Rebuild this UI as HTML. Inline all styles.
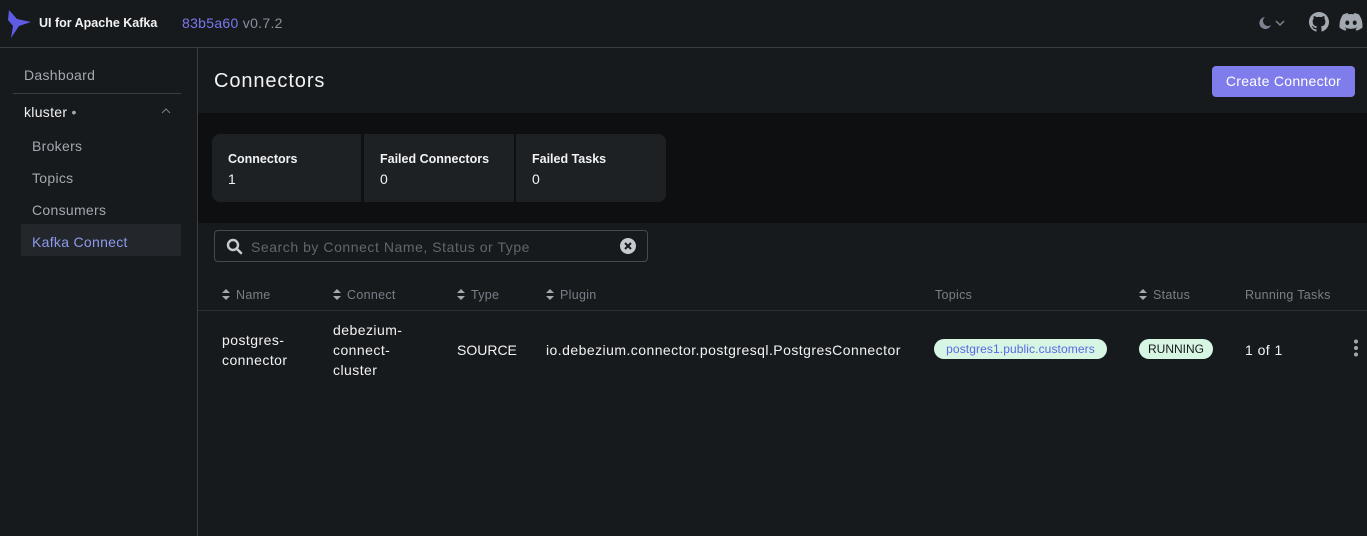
<!DOCTYPE html>
<html><head><meta charset="utf-8"><style>
*{box-sizing:border-box;margin:0;padding:0}
body{width:1367px;height:536px;background:#171a1c;font-family:"Liberation Sans",sans-serif;color:#f1f2f3;position:relative;overflow:hidden;font-size:14px;letter-spacing:0.3px}
.a{position:absolute;white-space:nowrap}
.hdr{left:0;top:0;width:1367px;height:48px;border-bottom:1px solid #3a3e44}
.side{left:197px;top:48px;width:1px;height:488px;background:#3a3e44}
.nav{color:#a3a9b0;font-size:14px}
.th{color:#787f88;font-size:12.5px}
.sort{display:inline-block;width:8px;margin-right:6px;vertical-align:-1px}
.card{background:#1e2124;height:68px;top:134px}
.card .l{position:absolute;left:16px;top:18px;font-size:12.5px;font-weight:bold;letter-spacing:0}
.card .v{position:absolute;left:16px;top:37px;font-size:14px}
.td{font-size:14px;color:#f1f2f3;line-height:20px;letter-spacing:0.45px}
</style></head><body>
<div class="a hdr"></div>
<svg class="a" style="left:8px;top:10px" width="24" height="28" viewBox="0 0 24 28"><path d="M1 0 L9 9 L23 12 L11 16 L3 28 L5 16 L0 10 Z" fill="#5e5ce6"/></svg>
<div class="a" style="left:39px;top:16px;font-size:12.5px;font-weight:bold;color:#f1f2f3;letter-spacing:0">UI for Apache Kafka</div>
<div class="a" style="left:182px;top:15px;font-size:14px;color:#7b78f0">83b5a60 <span style="color:#8a8fa0">v0.7.2</span></div>
<svg class="a" style="left:1259px;top:16px" width="28" height="14" viewBox="0 0 28 14"><path d="M6 1 A6 6 0 1 0 12 9 A5 5 0 0 1 6 1Z" fill="#7b8490"/><path d="M17 5 L21 9 L25 5" stroke="#7b8490" stroke-width="1.5" fill="none"/></svg>
<svg class="a" style="left:1309px;top:12px" width="20" height="20" viewBox="0 0 16 16"><path fill="#a3a9b0" d="M8 0C3.580 0 0 3.58 0 8c0 3.54 2.29 6.53 5.47 7.590.4.07.55-.17.55-.38 0-.19-.01-.82-.01-1.49-2.010.37-2.53-.49-2.69-.94-.09-.23-.48-.94-.82-1.13-.28-.15-.68-.52-.01-.53.63-.01 1.08.58 1.23.82.72 1.21 1.87.87 2.33.66.07-.52.28-.87.51-1.07-1.78-.2-3.64-.89-3.64-3.95 0-.87.31-1.59.82-2.15-.08-.2-.36-1.02.08-2.12 0 0 .67-.21 2.2.82.64-.18 1.32-.27 2-.27.68 0 1.36.09 2 .27 1.53-1.04 2.2-.82 2.2-.82.44 1.1.16 1.92.08 2.12.51.56.82 1.27.82 2.15 0 3.07-1.87 3.75-3.65 3.95.29.25.54.73.54 1.48 0 1.07-.01 1.93-.01 2.2 0 .21.15.46.55.38A8.013 8.013 0 0016 8c0-4.42-3.58-8-8-8z"/></svg>
<svg class="a" style="left:1339px;top:13px" width="24" height="18" viewBox="0 0 24 18"><path fill="#a3a9b0" d="M20 1.5A19 19 0 0 0 15.3 0l-.6 1.2a18 18 0 0 0-5.4 0L8.7 0A19 19 0 0 0 4 1.5C1 6 .2 10.4.6 14.8A19 19 0 0 0 6.4 17.7l1.2-1.9a12 12 0 0 1-1.9-.9l.5-.4a13.5 13.5 0 0 0 11.6 0l.5.4a12 12 0 0 1-1.9.9l1.2 1.9a19 19 0 0 0 5.8-2.9c.5-5.1-.8-9.5-3.4-13.3zM8.3 12.1c-1.1 0-2-1-2-2.3s.9-2.3 2-2.3 2 1 2 2.3-.9 2.3-2 2.3zm7.4 0c-1.1 0-2-1-2-2.3s.9-2.3 2-2.3 2 1 2 2.3-.9 2.3-2 2.3z"/></svg>
<div class="a side"></div>
<div class="a nav" style="left:24px;top:67px">Dashboard</div>
<div class="a" style="left:13px;top:93px;width:168px;height:1px;background:#3a3e44"></div>
<div class="a" style="left:24px;top:104px;color:#f1f2f3">kluster <span style="color:#a3a9b0">•</span></div>
<svg class="a" style="left:161px;top:108px" width="10" height="6"><path d="M1 5 L5 1 L9 5" stroke="#7b8490" fill="none"/></svg>
<div class="a nav" style="left:32px;top:138px">Brokers</div>
<div class="a nav" style="left:32px;top:170px">Topics</div>
<div class="a nav" style="left:32px;top:202px">Consumers</div>
<div class="a" style="left:21px;top:224px;width:160px;height:32px;background:#23272b"></div>
<div class="a" style="left:32px;top:234px;color:#8e99ec">Kafka Connect</div>
<div class="a" style="left:214px;top:70px;font-size:20px;color:#f1f2f3;letter-spacing:0.9px">Connectors</div>
<div class="a" style="left:1212px;top:66px;width:143px;height:31px;background:#7f7ceb;border-radius:4px;color:#fff;font-size:14px;line-height:31px;text-align:center">Create Connector</div>
<div class="a" style="left:198px;top:113px;width:1169px;height:110px;background:#0e0f11"></div>
<div class="a card" style="left:212px;width:149px;border-radius:8px 0 0 8px"><div class="l">Connectors</div><div class="v">1</div></div>
<div class="a card" style="left:364px;width:150px"><div class="l">Failed Connectors</div><div class="v">0</div></div>
<div class="a card" style="left:516px;width:150px;border-radius:0 8px 8px 0"><div class="l">Failed Tasks</div><div class="v">0</div></div>
<div class="a" style="left:214px;top:230px;width:434px;height:32px;border:1px solid #454a52;border-radius:4px"></div>
<svg class="a" style="left:226px;top:238px" width="17" height="17" viewBox="0 0 17 17"><circle cx="7" cy="7" r="5" stroke="#c5cad0" stroke-width="2.4" fill="none"/><path d="M10.5 10.5 L15 15" stroke="#c5cad0" stroke-width="2.6" stroke-linecap="round"/></svg>
<div class="a" style="left:251px;top:239px;color:#5f666e;font-size:14px;letter-spacing:0.55px">Search by Connect Name, Status or Type</div>
<svg class="a" style="left:620px;top:238px" width="16" height="16"><circle cx="8" cy="8" r="8" fill="#c5cad0"/><path d="M5 5 L11 11 M11 5 L5 11" stroke="#171a1c" stroke-width="2"/></svg>
<div class="a th" style="left:222px;top:288px"><svg class="sort" width="8" height="11"><path d="M0 4 L4 0 L8 4Z M0 7 L4 11 L8 7Z" fill="#a3a9b0"/></svg>Name</div>
<div class="a th" style="left:333px;top:288px"><svg class="sort" width="8" height="11"><path d="M0 4 L4 0 L8 4Z M0 7 L4 11 L8 7Z" fill="#a3a9b0"/></svg>Connect</div>
<div class="a th" style="left:457px;top:288px"><svg class="sort" width="8" height="11"><path d="M0 4 L4 0 L8 4Z M0 7 L4 11 L8 7Z" fill="#a3a9b0"/></svg>Type</div>
<div class="a th" style="left:546px;top:288px"><svg class="sort" width="8" height="11"><path d="M0 4 L4 0 L8 4Z M0 7 L4 11 L8 7Z" fill="#a3a9b0"/></svg>Plugin</div>
<div class="a th" style="left:935px;top:288px">Topics</div>
<div class="a th" style="left:1139px;top:288px"><svg class="sort" width="8" height="11"><path d="M0 4 L4 0 L8 4Z M0 7 L4 11 L8 7Z" fill="#a3a9b0"/></svg>Status</div>
<div class="a th" style="left:1245px;top:288px">Running Tasks</div>
<div class="a" style="left:198px;top:310px;width:1169px;height:1px;background:#2c3035"></div>
<div class="a td" style="left:222px;top:330px">postgres-<br>connector</div>
<div class="a td" style="left:333px;top:320px">debezium-<br>connect-<br>cluster</div>
<div class="a td" style="left:457px;top:340px;letter-spacing:0">SOURCE</div>
<div class="a td" style="left:546px;top:340px">io.debezium.connector.postgresql.PostgresConnector</div>
<div class="a" style="left:934px;top:339px;width:173px;height:20px;border-radius:10px;background:#d6f5e3;color:#5b67e6;font-size:12px;line-height:20px;text-align:center;letter-spacing:0.1px">postgres1.public.customers</div>
<div class="a" style="left:1139px;top:339px;width:74px;height:20px;border-radius:10px;background:#d6f5e3;color:#171a1c;font-size:12px;line-height:20px;text-align:center;letter-spacing:0">RUNNING</div>
<div class="a td" style="left:1245px;top:340px">1 of 1</div>
<svg class="a" style="left:1353px;top:339px" width="6" height="18"><circle cx="3" cy="2.5" r="2" fill="#a3a9b0"/><circle cx="3" cy="9" r="2" fill="#a3a9b0"/><circle cx="3" cy="15.5" r="2" fill="#a3a9b0"/></svg>
</body></html>
